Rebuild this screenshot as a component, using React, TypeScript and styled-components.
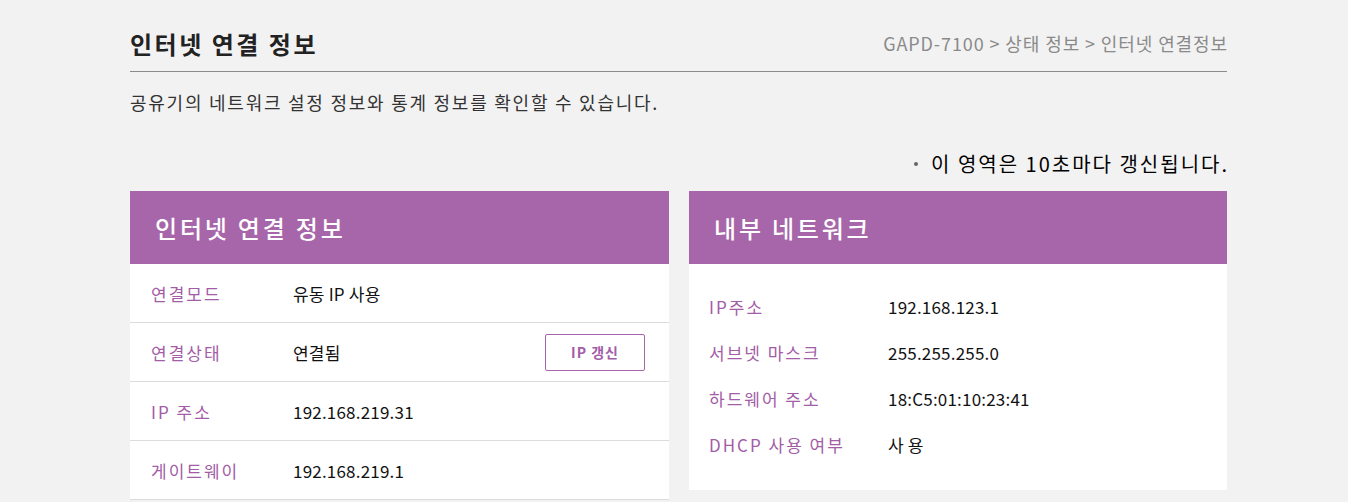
import React, { FC } from "react";
import styled, { createGlobalStyle } from "styled-components";

const GlobalStyle = createGlobalStyle`
  html, body {
    margin: 0;
    padding: 0;
    background: #f2f2f2;
    font-family: "Noto Sans CJK KR", "Noto Sans", sans-serif;
  }
`;

const wanRows = [
  { label: "연결모드", value: "유동 IP 사용" },
  { label: "연결상태", value: "연결됨", button: true },
  { label: "IP 주소", value: "192.168.219.31" },
  { label: "게이트웨이", value: "192.168.219.1" },
];

const lanRows = [
  { label: "IP주소", value: "192.168.123.1" },
  { label: "서브넷 마스크", value: "255.255.255.0" },
  { label: "하드웨어 주소", value: "18:C5:01:10:23:41" },
  { label: "DHCP 사용 여부", value: "사 용" },
];

const App: FC = () => {
  return (
    <>
      <GlobalStyle />
      <Page>
        <TitleBar>
          <Title>인터넷 연결 정보</Title>
          <Breadcrumb>GAPD-7100 &gt; 상태 정보 &gt; 인터넷 연결정보</Breadcrumb>
        </TitleBar>
        <Description>
          공유기의 네트워크 설정 정보와 통계 정보를 확인할 수 있습니다.
        </Description>
        <Notice>
          <Bullet />이 영역은 10초마다 갱신됩니다.
        </Notice>
        <Panels>
          <Panel>
            <PanelHeader>인터넷 연결 정보</PanelHeader>
            <div>
              {wanRows.map((r) => (
                <WanRow key={r.label}>
                  <Label $width={142}>{r.label}</Label>
                  <Value>{r.value}</Value>
                  {r.button && <RenewButton>IP 갱신</RenewButton>}
                </WanRow>
              ))}
            </div>
          </Panel>
          <Panel>
            <PanelHeader>내부 네트워크</PanelHeader>
            <LanList>
              {lanRows.map((r) => (
                <LanRow key={r.label}>
                  <Label $width={179}>{r.label}</Label>
                  <Value>{r.value}</Value>
                </LanRow>
              ))}
            </LanList>
          </Panel>
        </Panels>
      </Page>
    </>
  );
};

const Page = styled.div`
  width: 1097px;
  margin-left: 130px;
  padding-top: 25px;
`;

const TitleBar = styled.div`
  display: flex;
  justify-content: space-between;
  align-items: center;
  height: 36px;
  padding-bottom: 10px;
  border-bottom: 1px solid #8c8c8c;
`;

const Title = styled.h1`
  margin: 0;
  font-size: 24px;
  font-weight: 700;
  color: #222;
  letter-spacing: 2.5px;
`;

const Breadcrumb = styled.div`
  font-size: 18px;
  color: #8a8a8a;
  letter-spacing: 0.9px;
  margin-right: -1px;
`;

const Description = styled.p`
  margin: 17px 0 0;
  font-size: 18px;
  line-height: 26px;
  color: #333;
  letter-spacing: 1.75px;
`;

const Notice = styled.div`
  display: flex;
  justify-content: flex-end;
  align-items: center;
  margin-top: 37px;
  font-size: 20px;
  line-height: 24px;
  color: #000;
  letter-spacing: 2px;
  margin-right: -2px;
`;

const Bullet = styled.span`
  width: 4px;
  height: 4px;
  border-radius: 50%;
  background: #666;
  margin-right: 13px;
`;

const Panels = styled.div`
  display: grid;
  grid-template-columns: 539px 538px;
  gap: 20px;
  align-items: start;
  margin-top: 15px;
`;

const Panel = styled.section`
  background: #fff;
`;

const PanelHeader = styled.h2`
  margin: 0;
  height: 73px;
  display: flex;
  align-items: center;
  padding-left: 25px;
  background: #a766a9;
  color: #fff;
  font-size: 24px;
  font-weight: 500;
  letter-spacing: 2.8px;
`;

const WanRow = styled.div`
  display: flex;
  align-items: center;
  height: 58px;
  padding: 0 24px 0 21px;
  border-bottom: 1px solid #dcdcdc;
`;

const LanList = styled.div`
  padding: 19px 0 23px;
`;

const LanRow = styled.div`
  display: flex;
  align-items: center;
  height: 46px;
  padding-left: 20px;
`;

const Label = styled.span<{ $width: number }>`
  width: ${(p) => p.$width}px;
  flex-shrink: 0;
  font-size: 17px;
  color: #a35ca6;
  letter-spacing: 2px;
`;

const Value = styled.span`
  flex: 1;
  font-size: 17px;
  color: #111;
  letter-spacing: 0.2px;
`;

const RenewButton = styled.button`
  width: 100px;
  height: 37px;
  background: #fff;
  border: 1px solid #a766a9;
  border-radius: 2px;
  color: #a35ca6;
  font-family: inherit;
  font-size: 14px;
  font-weight: 700;
  letter-spacing: 1px;
  cursor: pointer;
`;

export default App;
